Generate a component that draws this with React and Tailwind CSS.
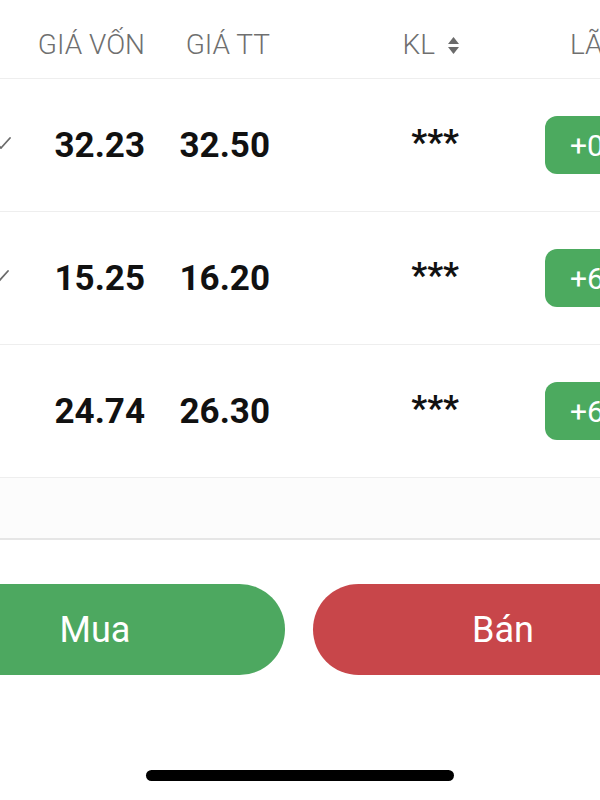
import React from "react";

const rows = [
  { cost: "32.23", price: "32.50", pnl: "+0", checked: true },
  { cost: "15.25", price: "16.20", pnl: "+6", checked: true },
  { cost: "24.74", price: "26.30", pnl: "+6", checked: false },
];

const Check = () => (
  <svg width="16" height="14" viewBox="0 0 16 14" className="shrink-0">
    <path d="M1 8 L5 12 L14 2" fill="none" stroke="#6b6b6b" strokeWidth="1.8" strokeLinecap="round" strokeLinejoin="round" />
  </svg>
);

const SortIcon = () => (
  <svg width="13" height="19" viewBox="0 0 13 19" className="ml-[12px] shrink-0">
    <path d="M6.5 1 L12 8 L1 8 Z" fill="#6b6b6b" />
    <path d="M6.5 18 L12 11 L1 11 Z" fill="#6b6b6b" />
  </svg>
);

const App = () => {
  return (
    <div
      className="w-[600px] h-[800px] bg-white overflow-hidden flex flex-col"
      style={{ fontFamily: "Roboto, 'Liberation Sans', sans-serif" }}
    >
      {/* header */}
      <div className="h-[79px] shrink-0 flex items-center border-b border-[#eeeeee] text-[28px] font-light text-[#6f6f6f] pt-[12px]">
        <div className="w-[145px] shrink-0 text-right whitespace-nowrap">GIÁ VỐN</div>
        <div className="w-[125px] shrink-0 text-right whitespace-nowrap">GIÁ TT</div>
        <div className="w-[190px] shrink-0 flex items-center justify-end">
          KL
          <SortIcon />
        </div>
        <div className="pl-[110px] shrink-0 whitespace-nowrap">LÃI/LỖ</div>
      </div>

      {rows.map((r, i) => (
        <div key={i} className="h-[133px] shrink-0 flex items-center border-b border-[#eeeeee]">
          <div className="w-[145px] shrink-0 flex items-center justify-between">
            <div className={i === 0 ? "-ml-[4px] mt-[-4px]" : "-ml-[6px] mt-[-4px]"}>
              {r.checked ? <Check /> : <span className="w-[16px] block" />}
            </div>
            <span className="text-[35px] font-bold text-[#111111] mt-[3px]">{r.cost}</span>
          </div>
          <div className="w-[125px] shrink-0 text-right text-[35px] font-bold text-[#111111] mt-[3px]">{r.price}</div>
          <div className="w-[190px] shrink-0 text-right text-[35px] font-bold text-[#111111] mt-[-4px] pr-[1px]">***</div>
          <div className="pl-[85px] shrink-0">
            <div className="w-[120px] h-[58px] rounded-[12px] bg-[#4caa5f] text-white text-[30px] flex items-center pl-[25px]">
              {r.pnl}
            </div>
          </div>
        </div>
      ))}

      <div className="h-[62px] shrink-0 bg-[#fcfcfc] border-b-2 border-[#e6e6e6]" />

      <div className="flex gap-[28px] ml-[-95px] w-[788px] mt-[44px] shrink-0">
        <div className="flex-1 h-[91px] rounded-full bg-[#4da860] text-white text-[36px] flex items-center justify-center">
          Mua
        </div>
        <div className="flex-1 h-[91px] rounded-full bg-[#c8464a] text-white text-[36px] flex items-center justify-center">
          Bán
        </div>
      </div>

      <div className="flex-1 flex items-end justify-center pb-[19px]">
        <div className="w-[308px] h-[11px] rounded-full bg-black" />
      </div>
    </div>
  );
};

export default App;
